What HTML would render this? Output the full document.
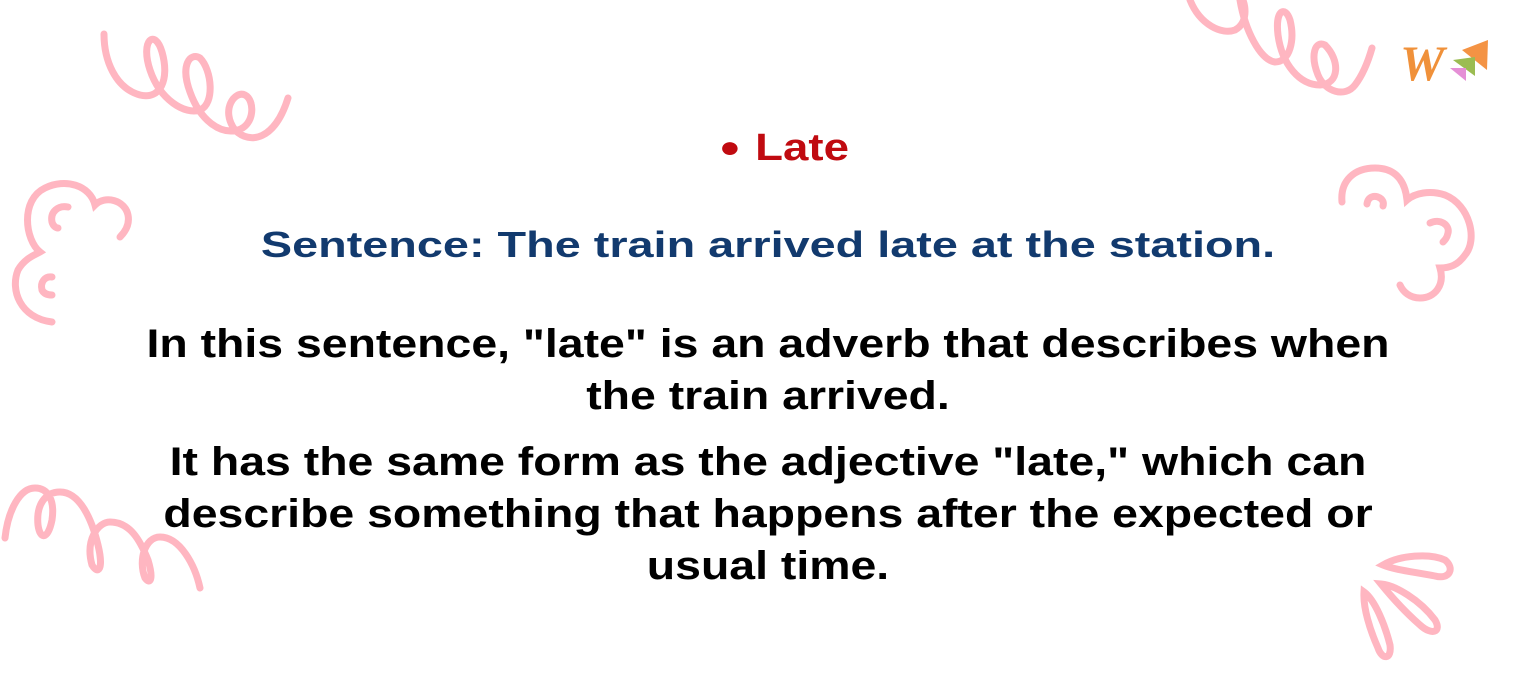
<!DOCTYPE html>
<html><head><meta charset="utf-8"><style>
html,body{margin:0;padding:0;background:#fff;}
body{width:1536px;height:700px;position:relative;overflow:hidden;font-family:"Liberation Sans",sans-serif;font-weight:bold;}
.l{position:absolute;left:0;width:1536px;text-align:center;white-space:nowrap;transform-origin:768px 50%;}
.b{color:#000;font-size:40px;line-height:52px;transform:scaleX(1.16);}
svg{position:absolute;left:0;top:0;}
</style></head><body>
<svg width="1536" height="700" fill="none" stroke="#ffb6c1" stroke-width="7" stroke-linecap="round">
<path d="M104 34 C104 60 115 88 140 95 C160 100 170 80 162 52 C155 28 140 40 150 70 C160 100 185 115 200 110 C215 104 212 70 200 58 C190 52 180 65 190 92 C200 120 220 135 238 130 C255 125 255 100 245 95 C235 90 220 110 235 130 C250 145 275 140 288 98"/>
<path d="M52 322 C20 318 10 290 18 270 C25 258 35 255 40 252 C25 240 20 200 45 188 C65 178 90 185 95 205 C105 195 125 200 128 215 C130 225 125 232 120 237"/>
<path d="M68 207 C58 205 50 212 52 222 C53 226 56 228 58 228"/>
<path d="M52 277 C45 276 40 282 42 290 C44 294 48 295 52 295"/>
<path d="M1190 0 C1200 25 1222 35 1235 30 C1250 22 1245 0 1240 -5 M1240 0 C1245 30 1260 60 1275 62 C1290 62 1295 40 1290 20 C1285 5 1275 10 1278 35 C1282 65 1300 85 1320 85 C1340 84 1340 60 1325 45 C1315 40 1310 55 1318 75 C1325 92 1345 98 1355 85 C1365 72 1370 55 1372 48"/>
<path d="M1342 202 C1340 180 1355 168 1375 168 C1395 168 1405 180 1407 200 C1415 193 1430 190 1445 195 C1470 205 1478 240 1465 255 C1458 265 1450 268 1440 268 C1445 285 1435 298 1420 298 C1410 298 1403 292 1400 285"/>
<path d="M1367 204 C1368 196 1375 195 1380 198 C1383 200 1384 203 1383 206"/>
<path d="M1430 223 C1440 218 1450 225 1448 233 C1447 238 1445 240 1443 242"/>
<path d="M5 538 C8 510 20 488 35 488 C48 488 55 500 52 520 C48 540 40 540 38 525 C36 505 45 492 60 492 C80 492 92 520 98 545 C104 570 98 575 92 565 C85 540 98 522 110 522 C130 522 140 540 148 560 C154 580 150 585 145 578 C138 560 145 537 160 537 C180 537 195 565 200 588"/>
<path d="M1383 565 C1400 555 1430 553 1445 560 C1455 568 1450 580 1435 576 C1415 572 1395 570 1383 565 Z"/>
<path d="M1381 584 C1395 585 1420 600 1435 620 C1442 632 1432 636 1420 625 C1405 612 1390 595 1381 584 Z"/>
<path d="M1364 592 C1375 600 1385 625 1390 645 C1392 660 1382 660 1378 648 C1370 630 1363 608 1364 592 Z"/>
</svg>
<svg width="1536" height="700">
<text x="1400" y="80" font-family="Liberation Serif" font-style="italic" font-size="50" fill="#f0913a">W</text>
<polygon points="1462,50 1488,40 1487,70" fill="#f49344"/>
<polygon points="1453,60 1475,57 1475,76" fill="#9bbc52"/>
<polygon points="1450,68 1466,68 1466,81" fill="#e58fd6"/>
</svg>
<div class="l" style="top:124px;left:16px;font-size:38px;line-height:48px;color:#c00a10;transform:scaleX(1.2);"><span style="font-size:30px;position:relative;top:-3px;margin-right:12px;">●</span>Late</div>
<div class="l" style="top:222px;font-size:36px;line-height:46px;color:#123a6e;transform:scaleX(1.3);">Sentence: The train arrived late at the station.</div>
<div class="l b" style="top:318px;">In this sentence, "late" is an adverb that describes when</div>
<div class="l b" style="top:370px;">the train arrived.</div>
<div class="l b" style="top:436px;">It has the same form as the adjective "late," which can</div>
<div class="l b" style="top:488px;">describe something that happens after the expected or</div>
<div class="l b" style="top:540px;">usual time.</div>
</body></html>
